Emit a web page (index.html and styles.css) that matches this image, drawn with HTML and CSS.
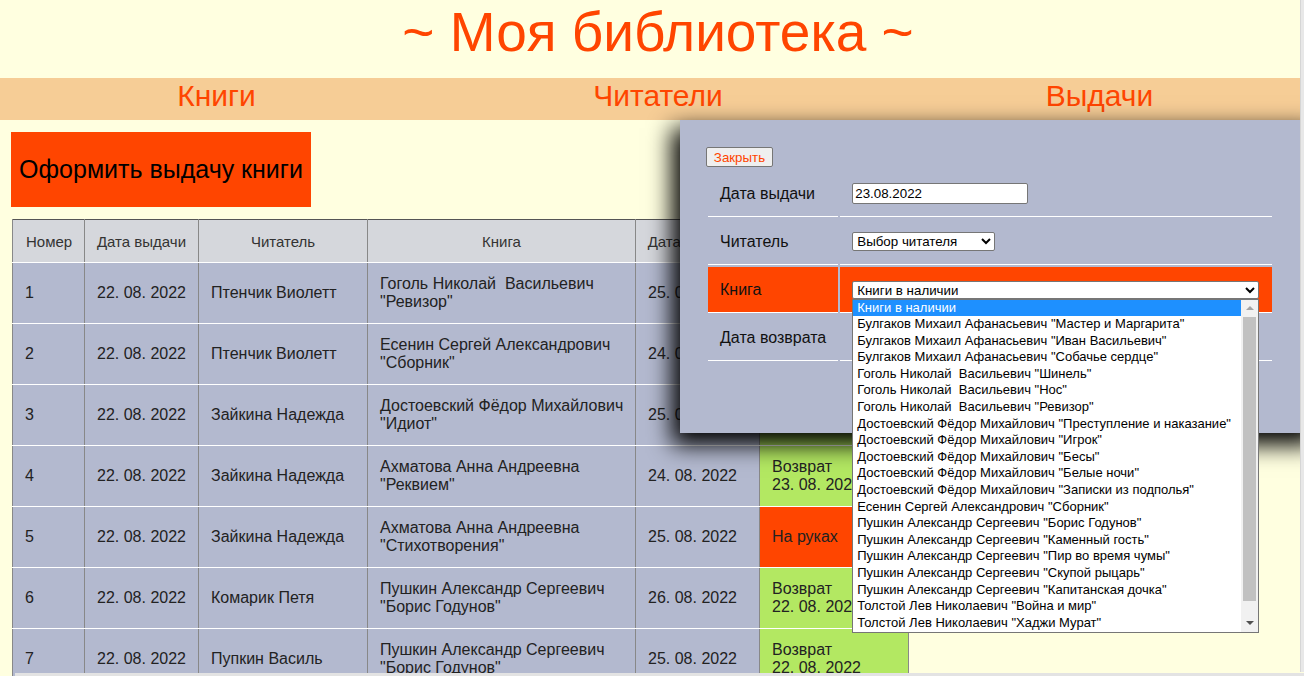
FILE: index.html
```html
<!DOCTYPE html>
<html lang="ru">
<head>
<meta charset="utf-8">
<title>Моя библиотека</title>
<link rel="stylesheet" href="styles.css">
</head>
<body>
<div class="page">
  <h1 class="title">~ Моя библиотека ~</h1>
  <nav class="nav">
    <a href="#">Книги</a>
    <a href="#">Читатели</a>
    <a href="#">Выдачи</a>
  </nav>
  <main class="content">
    <button class="issue-btn">Оформить выдачу книги</button>
    <table class="issues">
      <colgroup>
        <col class="c-num"><col class="c-date"><col class="c-reader"><col class="c-book"><col class="c-ret"><col class="c-status">
      </colgroup>
      <thead>
        <tr><th class="left">Номер</th><th>Дата выдачи</th><th>Читатель</th><th>Книга</th><th>Дата возврата</th><th>Статус</th></tr>
      </thead>
      <tbody>
        <tr><td>1</td><td>22. 08. 2022</td><td>Птенчик Виолетт</td><td>Гоголь Николай&nbsp; Васильевич<br>"Ревизор"</td><td>25. 08. 2022</td><td class="back">Возврат<br>23. 08. 2022</td></tr>
        <tr><td>2</td><td>22. 08. 2022</td><td>Птенчик Виолетт</td><td>Есенин Сергей Александрович<br>"Сборник"</td><td>24. 08. 2022</td><td class="back">Возврат<br>22. 08. 2022</td></tr>
        <tr><td>3</td><td>22. 08. 2022</td><td>Зайкина Надежда</td><td>Достоевский Фёдор Михайлович<br>"Идиот"</td><td>25. 08. 2022</td><td class="back">Возврат<br>23. 08. 2022</td></tr>
        <tr><td>4</td><td>22. 08. 2022</td><td>Зайкина Надежда</td><td>Ахматова Анна Андреевна<br>"Реквием"</td><td>24. 08. 2022</td><td class="back">Возврат<br>23. 08. 2022</td></tr>
        <tr><td>5</td><td>22. 08. 2022</td><td>Зайкина Надежда</td><td>Ахматова Анна Андреевна<br>"Стихотворения"</td><td>25. 08. 2022</td><td class="hand">На руках</td></tr>
        <tr><td>6</td><td>22. 08. 2022</td><td>Комарик Петя</td><td>Пушкин Александр Сергеевич<br>"Борис Годунов"</td><td>26. 08. 2022</td><td class="back">Возврат<br>22. 08. 2022</td></tr>
        <tr><td>7</td><td>22. 08. 2022</td><td>Пупкин Василь</td><td>Пушкин Александр Сергеевич<br>"Борис Годунов"</td><td>25. 08. 2022</td><td class="back">Возврат<br>22. 08. 2022</td></tr>
      </tbody>
    </table>
  </main>

  <div class="modal">
    <button class="close-btn">Закрыть</button>
    <table class="form">
      <tr><td class="lbl">Дата выдачи</td><td class="val"><input class="date-input" type="text" value="23.08.2022"></td></tr>
      <tr><td class="lbl">Читатель</td><td class="val"><select class="reader-select"><option>Выбор читателя</option></select></td></tr>
      <tr class="active"><td class="lbl">Книга</td><td class="val">
        <div class="book-wrap">
          <select class="book-select"><option>Книги в наличии</option></select>
          <div class="listbox">
            <div class="options">
              <div class="opt selected">Книги в наличии</div>
              <div class="opt">Булгаков Михаил Афанасьевич "Мастер и Маргарита"</div>
              <div class="opt">Булгаков Михаил Афанасьевич "Иван Васильевич"</div>
              <div class="opt">Булгаков Михаил Афанасьевич "Собачье сердце"</div>
              <div class="opt">Гоголь Николай&nbsp; Васильевич "Шинель"</div>
              <div class="opt">Гоголь Николай&nbsp; Васильевич "Нос"</div>
              <div class="opt">Гоголь Николай&nbsp; Васильевич "Ревизор"</div>
              <div class="opt">Достоевский Фёдор Михайлович "Преступление и наказание"</div>
              <div class="opt">Достоевский Фёдор Михайлович "Игрок"</div>
              <div class="opt">Достоевский Фёдор Михайлович "Бесы"</div>
              <div class="opt">Достоевский Фёдор Михайлович "Белые ночи"</div>
              <div class="opt">Достоевский Фёдор Михайлович "Записки из подполья"</div>
              <div class="opt">Есенин Сергей Александрович "Сборник"</div>
              <div class="opt">Пушкин Александр Сергеевич "Борис Годунов"</div>
              <div class="opt">Пушкин Александр Сергеевич "Каменный гость"</div>
              <div class="opt">Пушкин Александр Сергеевич "Пир во время чумы"</div>
              <div class="opt">Пушкин Александр Сергеевич "Скупой рыцарь"</div>
              <div class="opt">Пушкин Александр Сергеевич "Капитанская дочка"</div>
              <div class="opt">Толстой Лев Николаевич "Война и мир"</div>
              <div class="opt">Толстой Лев Николаевич "Хаджи Мурат"</div>
            </div>
            <div class="sbar">
              <div class="arrow up"></div>
              <div class="track"><div class="thumb"></div></div>
              <div class="arrow down"></div>
            </div>
          </div>
        </div>
      </td></tr>
      <tr><td class="lbl">Дата возврата</td><td class="val"></td></tr>
    </table>
  </div>

  <div class="edge-right"></div>
  <div class="edge-bottom"></div>
</div>
</body>
</html>
```

FILE: styles.css
```css
html, body {
  margin: 0;
  padding: 0;
  overflow: hidden;
  background: #ffffe0;
  font-family: "Liberation Sans", Arial, sans-serif;
}

.page {
  width: 1316px;
  height: 676px;
  position: relative;
}

.title {
  margin: 0;
  font-weight: normal;
  font-size: 55px;
  line-height: 64px;
  padding-bottom: 14px;
  text-align: center;
  color: #ff4500;
}

.nav {
  display: grid;
  grid-template-columns: repeat(3, 441.5px);
  justify-content: center;
  background: #f6cd96;
  height: 42px;
}

.nav a {
  text-align: center;
  color: #ff4500;
  font-size: 30px;
  line-height: 36px;
  text-decoration: none;
}

.content {
  padding: 12px 11px 0;
}

.issue-btn {
  display: block;
  width: 300px;
  height: 75px;
  padding: 0;
  border: 0;
  background: #ff4500;
  color: #000;
  font-family: "Liberation Sans", Arial, sans-serif;
  font-size: 25px;
}

.issues {
  margin: 12px 0 0 1px;
  border-collapse: collapse;
  table-layout: fixed;
  width: 897px;
  border: 1px solid #555;
  color: #222;
  font-size: 16px;
}

.c-num { width: 72px; }
.c-date { width: 114px; }
.c-reader { width: 169px; }
.c-book { width: 268px; }
.c-ret { width: 124px; }
.c-status { width: 149px; }

.issues th {
  background: #d5d7dc;
  font-weight: normal;
  font-size: 15px;
  height: 42px;
  padding: 0 4px;
  white-space: nowrap;
  text-align: center;
  border-left: 1px solid #888;
  border-right: 1px solid #888;
  border-bottom: 1px solid #fff;
  color: #333;
}

.issues th.left {
  text-align: left;
  padding-left: 13px;
}

.issues td {
  background: #b3b9cf;
  height: 60px;
  padding: 0 10px 0 12px;
  line-height: 18px;
  white-space: nowrap;
  border-left: 1px solid #888;
  border-right: 1px solid #888;
  border-bottom: 1px solid #fff;
  vertical-align: middle;
}

.issues td.back {
  background: #b3e862;
}

.issues td.hand {
  background: #ff4500;
}

/* modal */
.modal {
  position: absolute;
  top: 120px;
  left: 680px;
  width: 640px;
  box-sizing: border-box;
  padding: 27px 26px 70px;
  background: #b3b9cf;
  box-shadow: -6px 10px 22px 2px #000;
}

.close-btn {
  display: block;
  font-family: "Liberation Sans", Arial, sans-serif;
  font-size: 13.33px;
  color: #ff4500;
  background: #efefef;
  border: 1px solid #767676;
  border-radius: 2px;
  padding: 1px 6px;
  height: 20px;
  width: 67px;
}

.form {
  margin-top: 2px;
  border-collapse: separate;
  border-spacing: 2px;
  width: 568px;
  color: #111;
  font-size: 16px;
}

.form td {
  height: 46px;
  padding: 0 12px;
  white-space: nowrap;
  border-bottom: 1px solid #fff;
  vertical-align: middle;
  box-sizing: border-box;
}

.form td.lbl {
  width: 130px;
}

.form tr.active td {
  background: #ff4500;
}

.date-input {
  box-sizing: border-box;
  width: 176px;
  height: 21px;
  padding: 1px 2px;
  border: 1px solid #767676;
  border-radius: 2px;
  background: #fff;
  font-family: "Liberation Sans", Arial, sans-serif;
  font-size: 13.33px;
  color: #000;
  display: block;
}

.reader-select,
.book-select {
  display: block;
  box-sizing: border-box;
  height: 19px;
  border: 1px solid #767676;
  border-radius: 2px;
  background: #fff;
  font-family: "Liberation Sans", Arial, sans-serif;
  font-size: 13.33px;
  color: #000;
}

.reader-select { width: 143px; }
.book-select { width: 407px; height: 18px; }

.book-wrap {
  position: relative;
  width: 407px;
}

.listbox {
  position: absolute;
  top: 18px;
  left: 0;
  width: 407px;
  height: 334px;
  box-sizing: border-box;
  border: 1px solid #767676;
  background: #fff;
  display: flex;
  z-index: 5;
}

.options {
  flex: 1;
  font-size: 13px;
  color: #000;
}

.opt {
  height: 16.6px;
  line-height: 16.6px;
  padding-left: 4px;
  white-space: nowrap;
  overflow: hidden;
}

.opt.selected {
  background: #1e90ff;
  color: #fff;
}

.sbar {
  width: 17px;
  background: #f1f1f1;
  display: flex;
  flex-direction: column;
}

.arrow {
  height: 17px;
  position: relative;
}

.arrow::after {
  content: "";
  position: absolute;
  left: 5px;
  top: 6px;
  border-left: 4px solid transparent;
  border-right: 4px solid transparent;
}

.arrow.up::after {
  border-bottom: 4px solid #a3a3a3;
}

.arrow.down::after {
  border-top: 4px solid #505050;
}

.track {
  flex: 1;
  padding: 0 2px;
}

.thumb {
  height: 284px;
  background: #c1c1c1;
}

.edge-right {
  position: fixed;
  top: 0;
  right: 0;
  width: 4px;
  height: 672px;
  background: #e8e8e8;
  border-left: 1px solid #d6d6d6;
  box-sizing: border-box;
}

.edge-bottom {
  position: fixed;
  left: 15px;
  bottom: 0;
  width: 1289px;
  height: 3px;
  background: #e3e3e3;
}
```
